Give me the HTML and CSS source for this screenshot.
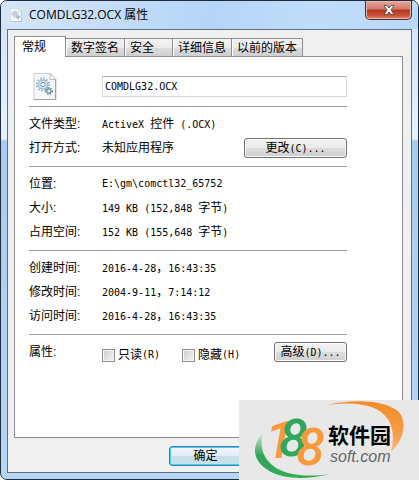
FILE: index.html
```html
<!DOCTYPE html>
<html lang="zh-CN">
<head>
  <meta charset="UTF-8" />
  <meta name="viewport" content="width=device-width, initial-scale=1.0"/>
  <title>COMDLG32.OCX 属性</title>
  <link rel="stylesheet" href="styles.css">
</head>
<body>
  <!-- gear-on-paper icon, shared by title bar and header -->
  <svg width="0" height="0" class="defs" aria-hidden="true">
    <symbol id="file-icon" viewBox="0 0 24 27">
      <path d="M1 .5h16l6 6v20H1z" fill="#f7f8f9" stroke="#c9ccd0"/>
      <path d="M17 .5v6h6z" fill="#fff" stroke="#b9bcc0"/>
      <path d="M22.500 7v19.500H1" fill="none" stroke="#9fa2a6"/>
      <circle cx="10" cy="11.500" r="6" fill="none" stroke="#8fb3ca" stroke-width="2" stroke-dasharray="1.600 1.500"/>
      <circle cx="10" cy="11.500" r="4.500" fill="#dceaf3" stroke="#86aec8"/>
      <circle cx="10" cy="11.500" r="2.200" fill="#fff" stroke="#6f98b4"/>
      <circle cx="16" cy="18" r="3" fill="none" stroke="#5d88a6" stroke-width="1.800" stroke-dasharray="1.400 1.100"/>
      <circle cx="16" cy="18" r="2" fill="#eef5f9" stroke="#5d8dac"/>
    </symbol>
  </svg>

  <div class="window">
    <header class="titlebar">
      <svg class="title-icon"><use href="#file-icon"/></svg>
      <h1>COMDLG32.OCX 属性</h1>
      <button class="close-btn" aria-label="关闭">
        <svg viewBox="0 0 12 10"><path d="M1 .5h3l2 2.500 2-2.500h3L8 5l3 4.500H8L6 7 4 9.500H1L4 5z" fill="#fff" stroke="#5b3a3a" stroke-width=".8"/></svg>
      </button>
    </header>

    <main class="client">
      <div class="tabs" role="tablist">
        <button class="tab active" role="tab" aria-selected="true">常规</button>
        <button class="tab" role="tab">数字签名</button>
        <button class="tab" role="tab">安全</button>
        <button class="tab" role="tab">详细信息</button>
        <button class="tab" role="tab">以前的版本</button>
      </div>

      <section class="panel">
        <div class="group file-head">
          <svg class="file-icon"><use href="#file-icon"/></svg>
          <input type="text" class="mono file-name" aria-label="文件名" value="COMDLG32.OCX">
        </div>

        <div class="group">
          <div class="row">
            <span class="label">文件类型:</span>
            <span><span class="mono">ActiveX </span>控件<span class="mono"> (.OCX)</span></span>
          </div>
          <div class="row">
            <span class="label">打开方式:</span>
            <span>未知应用程序</span>
            <button class="btn btn-wide">更改<span class="mono">(C)...</span></button>
          </div>
        </div>

        <div class="group">
          <div class="row">
            <span class="label">位置:</span>
            <span class="mono">E:\gm\comctl32_65752</span>
          </div>
          <div class="row">
            <span class="label">大小:</span>
            <span><span class="mono">149 KB (152,848 </span>字节<span class="mono">)</span></span>
          </div>
          <div class="row">
            <span class="label">占用空间:</span>
            <span><span class="mono">152 KB (155,648 </span>字节<span class="mono">)</span></span>
          </div>
        </div>

        <div class="group">
          <div class="row">
            <span class="label">创建时间:</span>
            <span><span class="mono">2016-4-28</span>，<span class="mono">16:43:35</span></span>
          </div>
          <div class="row">
            <span class="label">修改时间:</span>
            <span><span class="mono">2004-9-11</span>，<span class="mono">7:14:12</span></span>
          </div>
          <div class="row">
            <span class="label">访问时间:</span>
            <span><span class="mono">2016-4-28</span>，<span class="mono">16:43:35</span></span>
          </div>
        </div>

        <div class="group">
          <div class="row">
            <span class="label">属性:</span>
            <div class="checks">
              <label class="check"><input type="checkbox">只读<span class="mono">(R)</span></label>
              <label class="check"><input type="checkbox">隐藏<span class="mono">(H)</span></label>
            </div>
            <button class="btn">高级<span class="mono">(D)...</span></button>
          </div>
        </div>
      </section>

      <footer class="actions">
        <button class="btn btn-default">确定</button>
      </footer>
    </main>

    <!-- site badge -->
    <svg class="badge" viewBox="0 0 180 80" role="img" aria-label="188软件园 soft.com">
      <defs>
        <linearGradient id="orange" x1="0" y1="0" x2="0" y2="1">
          <stop offset="0" stop-color="#f28a2b"/>
          <stop offset=".7" stop-color="#f9a04a"/>
          <stop offset="1" stop-color="#f9c08a"/>
        </linearGradient>
        <linearGradient id="green" x1="0" y1="0" x2="0" y2="1">
          <stop offset="0" stop-color="#d5e6d8"/>
          <stop offset=".5" stop-color="#2fa45a"/>
          <stop offset="1" stop-color="#2fae55"/>
        </linearGradient>
      </defs>
      <path d="M88 5C118-2 148 1 160 12c9 11 4 29-8 40 3-12 3-25-4-34C138 5 118 1 88 5z" fill="url(#orange)"/>
      <path d="M24 33c-4 14 0 26 13 35 14 8 32 9 54 6-24 6-45 5-59-2C14 62 11 47 24 33z" fill="url(#green)"/>
      <text class="digit orange" x="26" y="58">1</text>
      <text class="digit green" x="40" y="56">8</text>
      <text class="digit orange" x="57" y="65">8</text>
      <text class="site-name" x="89" y="43">软件园</text>
      <text class="site-url" x="91" y="62">soft.com</text>
    </svg>
  </div>
</body>
</html>
```

FILE: styles.css
```css
* {
  box-sizing: border-box;
}

body {
  margin: 0;
  background: #fff;
  color: #000;
  font-family: 'Liberation Sans', 'Noto Sans CJK SC', sans-serif;
  font-size: 12px;
  line-height: 16px;
}

button, input {
  font: inherit;
  color: inherit;
}

.defs {
  position: absolute;
}

.mono {
  font-family: 'DejaVu Sans Mono', 'Noto Sans CJK SC', monospace;
  font-size: 10px;
  white-space: pre;
}

.window {
  position: relative;
  display: flex;
  flex-direction: column;
  min-height: 100vh;
  padding: 0 6px 6px;
  border: 1px solid #1d2b3c;
  border-radius: 7px;
  background: linear-gradient(#d3e6f9 28px, #e6f0fa 138px, #a9cbf1 140px, #b9d5f4);
}

.titlebar {
  display: flex;
  align-items: center;
  height: 28px;
  margin: 0 -6px;
  padding: 0 6px 0 9px;
  border-radius: 6px 6px 0 0;
  background: linear-gradient(100deg, #d5e6f7, #b5d5f8 50%, #c0dcfa 75%, #b9d9fa);
}

.titlebar h1 {
  flex: 1;
  margin: 0 0 0 7px;
  font-family: 'Open Sans', 'Noto Sans CJK SC', sans-serif;
  font-size: 12px;
  font-weight: 400;
}

.title-icon {
  width: 12px;
  height: 14px;
}

.close-btn {
  display: flex;
  align-self: flex-start;
  align-items: center;
  justify-content: center;
  width: 47px;
  height: 19px;
  padding: 0;
  border: 1px solid #5c2327;
  border-top: 0;
  border-radius: 0 0 5px 5px;
  background: linear-gradient(#e3a89c, #d2796a 45%, #b7331f 50%, #c9513a 80%, #dc8a70);
  box-shadow: inset 0 0 0 1px #e9b9ae;
}

.close-btn svg {
  width: 12px;
  height: 10px;
}

.client {
  display: flex;
  flex: 1;
  flex-direction: column;
  padding: 6px 8px 6px 6px;
  border: 1px solid #5d7088;
  background: #f0f0f0;
}

.tabs {
  display: flex;
  align-items: flex-end;
}

.tab {
  height: 18px;
  padding: 0 5px;
  border: 1px solid #8c8e94;
  border-bottom: 0;
  border-left: 0;
  background: linear-gradient(#f3f3f3, #ebebeb 50%, #dddddd 52%, #cfcfcf);
  line-height: 16px;
  text-align: left;
  white-space: nowrap;
}

.tab:not(.active) {
  box-shadow: inset 1px 0 #fff;
}

.tab:nth-child(3) {
  padding-right: 18px;
}

.tab.active {
  z-index: 1;
  height: 21px;
  margin-bottom: -1px;
  padding: 0 19px 0 7px;
  border-left: 1px solid #8c8e94;
  background: #fff;
}

.panel {
  flex: 1;
  padding: 0 55px 0 14px;
  border: 1px solid #8c8e94;
  background: #fff;
}

.group {
  padding: 5px 0 6px;
  border-bottom: 1px solid #a0a0a0;
}

.group:last-child {
  border-bottom: 0;
}

.file-head {
  display: flex;
  align-items: center;
  padding: 16px 0 6px 4px;
}

.file-icon {
  width: 24px;
  height: 27px;
}

.file-name {
  flex: 1;
  min-width: 0;
  height: 21px;
  margin-left: 45px;
  padding: 0 2px;
  border: 1px solid #d5d8de;
  border-top-color: #abadb3;
  background: #fff;
}

.row {
  display: flex;
  align-items: center;
  height: 24px;
}

.label {
  flex: none;
  width: 73px;
}

.checks {
  display: flex;
  gap: 22px;
  margin-top: 6px;
}

.check {
  display: flex;
  align-items: center;
}

.check input {
  appearance: none;
  width: 13px;
  height: 13px;
  margin: 0 3px 0 0;
  border: 1px solid #8e8f8f;
  background: linear-gradient(135deg, #c8cbcf, #f6f6f6);
  box-shadow: inset 0 0 0 1px #f4f4f4;
}

.btn {
  width: 73px;
  height: 20px;
  margin-left: auto;
  padding: 0;
  border: 1px solid #707070;
  border-radius: 3px;
  background: linear-gradient(#f2f2f2, #ebebeb 48%, #dddddd 52%, #cfcfcf);
  box-shadow: inset 0 0 0 1px #fbfbfb;
  line-height: 16px;
}

.btn-wide {
  width: 103px;
}

.btn-default {
  border-color: #3c7fb1;
  background: linear-gradient(#eef6fa, #e0eff7 48%, #c8dfeb 52%, #c4e2f0);
  box-shadow: inset 0 0 0 1px #48cdf0;
}

.actions {
  display: flex;
  padding: 8px 161px 0 0;
}

.badge {
  position: absolute;
  right: -1px;
  bottom: -1px;
  width: 180px;
  height: 80px;
  background: #e8e8e8;
}

.digit {
  font-family: Roboto, sans-serif;
  font-size: 52px;
  font-style: italic;
  font-weight: 500;
}

.orange {
  fill: #f9993a;
}

.green {
  fill: #2fa75c;
}

.site-name {
  font-family: 'Noto Sans CJK SC', sans-serif;
  font-size: 21px;
  font-weight: 700;
}

.site-url {
  font-family: 'Liberation Sans', sans-serif;
  font-size: 16px;
  font-style: italic;
  fill: #666;
}
```
